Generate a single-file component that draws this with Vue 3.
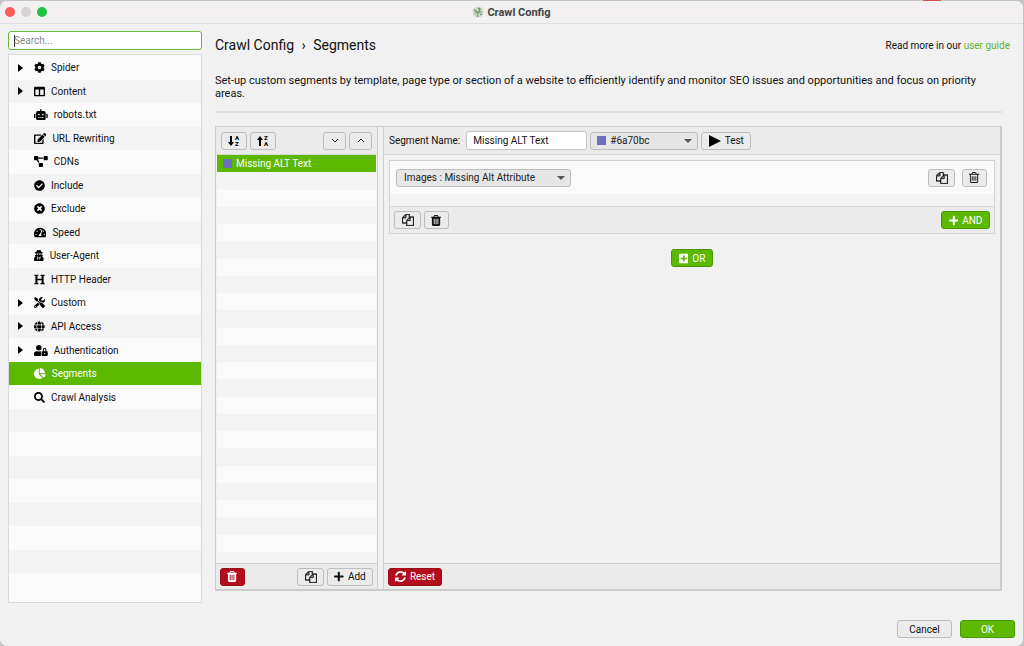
<script setup>
import { ref } from 'vue'

// icon name -> [viewBox, path]
const icons = {
  cog: ['0 0 512 512', 'M487.4 315.7l-42.6-24.6c4.3-23.2 4.3-47 0-70.2l42.6-24.6c4.9-2.8 7.1-8.6 5.5-14-11.1-35.6-30-67.8-54.7-94.6-3.8-4.1-10-5.1-14.8-2.3L380.8 110c-17.9-15.4-38.5-27.3-60.8-35.1V25.8c0-5.6-3.9-10.5-9.4-11.7-36.7-8.2-74.3-7.8-109.2 0-5.5 1.2-9.4 6.1-9.4 11.7V75c-22.2 7.9-42.8 19.8-60.8 35.1L88.7 85.5c-4.9-2.8-11-1.9-14.8 2.3-24.7 26.7-43.6 58.9-54.7 94.6-1.7 5.4.6 11.2 5.5 14L67.3 221c-4.3 23.2-4.3 47 0 70.2l-42.6 24.6c-4.9 2.8-7.1 8.6-5.5 14 11.1 35.6 30 67.8 54.7 94.6 3.8 4.1 10 5.1 14.8 2.3l42.6-24.6c17.9 15.4 38.5 27.3 60.8 35.1v49.2c0 5.6 3.9 10.5 9.4 11.7 36.7 8.2 74.3 7.8 109.2 0 5.5-1.2 9.4-6.1 9.4-11.7v-49.2c22.2-7.9 42.8-19.8 60.8-35.1l42.6 24.6c4.9 2.8 11 1.9 14.8-2.3 24.7-26.7 43.6-58.9 54.7-94.6 1.5-5.5-.7-11.3-5.6-14.1zM256 336c-44.1 0-80-35.9-80-80s35.9-80 80-80 80 35.9 80 80-35.9 80-80 80z'],
  columns: ['0 0 512 512', 'M464 32H48C21.49 32 0 53.49 0 80v352c0 26.51 21.49 48 48 48h416c26.51 0 48-21.49 48-48V80c0-26.51-21.49-48-48-48zM224 416H64V160h160v256zm224 0H288V160h160v256z'],
  robot: ['0 0 640 512', 'M32 224H64V416H32A32 32 0 0 1 0 384V256A32 32 0 0 1 32 224Zm512-48V448a64 64 0 0 1-64 64H160a64 64 0 0 1-64-64V176a80 80 0 0 1 80-80H288V32a32 32 0 0 1 64 0V96H464A80 80 0 0 1 544 176ZM264 256a40 40 0 1 0-40 40A40 40 0 0 0 264 256Zm-8 128H192v32h64Zm96 0H288v32h64ZM456 256a40 40 0 1 0-40 40A40 40 0 0 0 456 256Zm-8 128H384v32h64ZM640 256V384a32 32 0 0 1-32 32H576V224h32A32 32 0 0 1 640 256Z'],
  edit: ['0 0 576 512', 'M402.6 83.2l90.2 90.2c3.8 3.8 3.8 10 0 13.8L274.4 405.6l-92.8 10.3c-12.4 1.4-22.9-9.1-21.5-21.5l10.3-92.8L388.8 83.2c3.8-3.8 10-3.8 13.8 0zm162-22.9l-48.8-48.8c-15.2-15.2-39.9-15.2-55.2 0l-35.4 35.4c-3.8 3.8-3.8 10 0 13.8l90.2 90.2c3.8 3.8 10 3.8 13.8 0l35.4-35.4c15.2-15.3 15.2-40 0-55.2zM384 346.2V448H64V128h229.8c3.2 0 6.2-1.3 8.5-3.5l40-40c7.6-7.6 2.2-20.5-8.5-20.5H48C21.5 64 0 85.5 0 112v352c0 26.5 21.5 48 48 48h352c26.5 0 48-21.5 48-48V306.2c0-10.7-12.9-16-20.5-8.5l-40 40c-2.2 2.3-3.5 5.3-3.5 8.5z'],
  diagram: ['0 0 640 512', 'M384 320H256c-17.67 0-32 14.33-32 32v128c0 17.67 14.33 32 32 32h128c17.67 0 32-14.33 32-32V352c0-17.67-14.33-32-32-32zM192 32c0-17.67-14.33-32-32-32H32C14.33 0 0 14.33 0 32v128c0 17.67 14.33 32 32 32h95.72l73.16 128.04C211.98 300.98 232.4 288 256 288h.28L192 175.51V128h224V64H192V32zM608 0H480c-17.67 0-32 14.33-32 32v128c0 17.67 14.33 32 32 32h128c17.67 0 32-14.33 32-32V32c0-17.67-14.33-32-32-32z'],
  check: ['0 0 512 512', 'M504 256c0 136.967-111.033 248-248 248S8 392.967 8 256 119.033 8 256 8s248 111.033 248 248zM227.314 387.314l184-184c6.248-6.248 6.248-16.379 0-22.627l-22.627-22.627c-6.248-6.249-16.379-6.249-22.628 0L216 308.118l-70.059-70.059c-6.248-6.248-16.379-6.248-22.628 0l-22.627 22.627c-6.248 6.248-6.248 16.379 0 22.627l104 104c6.249 6.249 16.379 6.249 22.628.001z'],
  times: ['0 0 512 512', 'M256 8C119 8 8 119 8 256s111 248 248 248 248-111 248-248S393 8 256 8zm121.6 313.1c4.7 4.7 4.7 12.3 0 17L338 377.6c-4.7 4.7-12.3 4.7-17 0L256 312l-65.1 65.6c-4.7 4.7-12.3 4.7-17 0L134.4 338c-4.7-4.7-4.7-12.3 0-17l65.6-65-65.6-65.1c-4.7-4.7-4.7-12.3 0-17l39.6-39.6c4.7-4.7 12.3-4.7 17 0l65 65.7 65.1-65.6c4.7-4.7 12.3-4.7 17 0l39.6 39.6c4.7 4.7 4.7 12.3 0 17L312 256l65.6 65.1z'],
  gauge: ['0 0 576 512', 'M288 32C128.94 32 0 160.94 0 320c0 52.8 14.25 102.26 39.06 144.8 5.61 9.62 16.3 15.2 27.44 15.2h443c11.14 0 21.83-5.58 27.44-15.2C561.75 422.26 576 372.8 576 320c0-159.06-128.94-288-288-288zm0 64c14.71 0 26.58 10.13 30.32 23.65-1.11 2.26-2.64 4.23-3.45 6.67l-9.22 27.67c-5.13 3.49-10.97 6.01-17.64 6.01-17.67 0-32-14.33-32-32S270.33 96 288 96zM96 384c-17.67 0-32-14.33-32-32s14.33-32 32-32 32 14.33 32 32-14.33 32-32 32zm48-160c-17.67 0-32-14.33-32-32s14.33-32 32-32 32 14.33 32 32-14.33 32-32 32zm246.77-72.41l-61.33 184C343.13 347.33 352 364.54 352 384c0 11.72-3.38 22.55-8.88 32H232.88c-5.5-9.45-8.88-20.28-8.88-32 0-33.94 26.5-61.43 59.9-63.59l61.34-184.01c4.17-12.56 17.73-19.45 30.36-15.17 12.57 4.19 19.35 17.79 15.17 30.36zm14.66 57.2l15.52-46.55c3.47-1.29 7.13-2.23 11.05-2.23 17.67 0 32 14.33 32 32s-14.33 32-32 32c-11.38-.01-20.89-6.28-26.57-15.22zM480 384c-17.67 0-32-14.33-32-32s14.33-32 32-32 32 14.33 32 32-14.33 32-32 32z'],
  secret: ['0 0 448 512', 'M383.9 308.3l23.9-62.6c4-10.5-3.7-21.7-15-21.7h-58.5c11-18.9 17.8-40.6 17.8-64v-.3c39.2-7.8 64-19.1 64-31.7 0-13.3-27.3-25.1-70.1-33-9.2-32.8-27-65.8-40.6-82.8-9.5-11.9-25.9-15.6-39.5-8.8l-27.6 13.8c-9 4.5-19.6 4.5-28.6 0L182.1 3.4c-13.6-6.8-30-3.1-39.5 8.8-13.5 17-31.4 50-40.6 82.8-42.7 7.9-70 19.7-70 33 0 12.6 24.8 23.9 64 31.7v.3c0 23.4 6.8 45.1 17.8 64H56.3c-11.5 0-19.2 11.7-14.7 22.3l25.8 60.2C27.3 329.8 0 372.7 0 422.4v44.8C0 491.9 20.1 512 44.8 512h358.4c24.7 0 44.8-20.1 44.8-44.8v-44.8c0-48.4-25.8-90.4-64.1-114.1zM176 480l-41.6-192 49.6 32 24 40-32 120zm96 0l-32-120 24-40 49.6-32L272 480zm41.7-298.5c-3.9 11.9-7 24.6-16.5 33.4-10.1 9.3-48 22.4-64-25-2.8-8.4-15.4-8.4-18.3 0-17 50.2-56 32.4-64 25-9.5-8.8-12.7-21.5-16.5-33.4-.8-2.5-6.3-5.7-6.3-5.8v-10.8c28.3 3.6 61 5.8 96 5.8s67.7-2.1 96-5.8v10.8c-.1.1-5.6 3.2-6.4 5.8z'],
  heading: ['0 0 512 512', 'M448 96v320h32a16 16 0 0 1 16 16v32a16 16 0 0 1-16 16H320a16 16 0 0 1-16-16v-32a16 16 0 0 1 16-16h32V288H160v128h32a16 16 0 0 1 16 16v32a16 16 0 0 1-16 16H32a16 16 0 0 1-16-16v-32a16 16 0 0 1 16-16h32V96H32a16 16 0 0 1-16-16V48a16 16 0 0 1 16-16h160a16 16 0 0 1 16 16v32a16 16 0 0 1-16 16h-32v128h192V96h-32a16 16 0 0 1-16-16V48a16 16 0 0 1 16-16h160a16 16 0 0 1 16 16v32a16 16 0 0 1-16 16z'],
  tools: ['0 0 512 512', 'M501.1 395.7L384 278.6c-23.1-23.1-57.6-27.6-85.4-13.9L192 158.1V96L64 0 0 64l96 128h62.1l106.6 106.6c-13.6 27.8-9.2 62.3 13.9 85.4l117.1 117.1c14.6 14.6 38.2 14.6 52.7 0l52.7-52.7c14.5-14.6 14.5-38.2 0-52.7zM331.7 225c28.3 0 54.9 11 74.9 31l19.4 19.4c15.8-6.9 30.8-16.5 43.8-29.5 37.1-37.1 49.7-89.3 37.9-136.7-2.2-9-13.5-12.1-20.1-5.5l-74.4 74.4-67.9-11.3L334 98.9l74.4-74.4c6.6-6.6 3.4-17.9-5.7-20.2-47.4-11.7-99.6.9-136.6 37.9-28.5 28.5-41.9 66.1-41.2 103.6l82.1 82.1c8.1-1.9 16.5-2.9 24.7-2.9zm-103.9 82l-56.7-56.7L18.7 402.8c-25 25-25 65.5 0 90.5s65.5 25 90.5 0l123.6-123.6c-7.6-19.9-9.9-41.6-5-62.7zM64 472c-13.2 0-24-10.8-24-24 0-13.3 10.7-24 24-24s24 10.7 24 24c0 13.2-10.7 24-24 24z'],
  globe: ['0 0 496 512', 'M336.5 160C322 70.7 287.8 8 248 8s-74 62.7-88.5 152h177zM152 256c0 22.2 1.2 43.5 3.3 64h185.3c2.1-20.5 3.3-41.8 3.3-64s-1.2-43.5-3.3-64H155.3c-2.1 20.5-3.3 41.8-3.3 64zm324.7-96c-28.6-67.9-86.5-120.4-158-141.6 24.4 33.8 41.2 84.7 50 141.6h108zM177.2 18.4C105.8 39.6 47.8 92.1 19.3 160h108c8.7-56.9 25.5-107.8 49.9-141.6zM487.4 192H372.7c2.1 21 3.3 42.5 3.3 64s-1.2 43-3.3 64h114.6c5.5-20.5 8.6-41.8 8.6-64s-3.1-43.5-8.5-64zM120 256c0-21.5 1.2-43 3.3-64H8.6C3.2 212.5 0 233.8 0 256s3.2 43.5 8.6 64h114.6c-2-21-3.2-42.5-3.2-64zm39.5 96c14.5 89.3 48.7 152 88.5 152s74-62.7 88.5-152h-177zm159.3 141.6c71.4-21.2 129.4-73.7 158-141.6h-108c-8.8 56.9-25.6 107.8-50 141.6zM19.3 352c28.6 67.9 86.5 120.4 158 141.6-24.4-33.8-41.2-84.7-50-141.6h-108z'],
  lock: ['0 0 640 512', 'M224 256A128 128 0 1 0 96 128a128 128 0 0 0 128 128zm96 64a63.08 63.08 0 0 1 8.1-30.5c-4.8-.5-9.5-1.5-14.5-1.5h-16.7a174.08 174.08 0 0 1-145.8 0h-16.7A134.43 134.43 0 0 0 0 422.4V464a48 48 0 0 0 48 48h280.9a63.54 63.54 0 0 1-8.9-32zm288-32h-32v-80a80 80 0 0 0-160 0v80h-32a32 32 0 0 0-32 32v160a32 32 0 0 0 32 32h224a32 32 0 0 0 32-32V320a32 32 0 0 0-32-32zM496 432a32 32 0 1 1 32-32 32 32 0 0 1-32 32zm32-144h-64v-80a32 32 0 0 1 64 0z'],
  pie: ['0 0 544 512', 'M527.79 288H290.5l158.03 158.03c6.04 6.04 15.98 6.53 22.19.68 38.7-36.46 65.32-85.61 73.13-140.86 1.34-9.46-6.51-17.85-16.06-17.85zm-15.83-64.8C503.72 103.74 408.26 8.28 288.8.04 279.68-.59 272 7.1 272 16.24V240h223.77c9.14 0 16.82-7.68 16.19-16.8zM224 288V50.71c0-9.55-8.39-17.4-17.84-16.06C86.99 51.49-4.1 155.6.14 280.37 4.5 408.51 114.83 513.59 243.03 511.98c50.4-.63 96.97-16.87 135.26-44.03 7.9-5.6 8.42-17.23 1.57-24.08L224 288z'],
  search: ['0 0 512 512', 'M505 442.7L405.3 343c-4.5-4.5-10.6-7-17-7H372c27.6-35.3 44-79.7 44-128C416 93.1 322.9 0 208 0S0 93.1 0 208s93.1 208 208 208c48.3 0 92.7-16.4 128-44v16.3c0 6.4 2.5 12.5 7 17l99.7 99.7c9.4 9.4 24.6 9.4 33.9 0l28.3-28.3c9.4-9.4 9.4-24.6.1-34zM208 336c-70.7 0-128-57.2-128-128 0-70.7 57.2-128 128-128 70.7 0 128 57.2 128 128 0 70.7-57.2 128-128 128z'],
  plus: ['0 0 448 512', 'M416 208H272V64c0-17.67-14.33-32-32-32h-32c-17.67 0-32 14.33-32 32v144H32c-17.67 0-32 14.33-32 32v32c0 17.67 14.33 32 32 32h144v144c0 17.67 14.33 32 32 32h32c17.67 0 32-14.33 32-32V304h144c17.67 0 32-14.33 32-32v-32c0-17.67-14.33-32-32-32z'],
  plusSquare: ['0 0 448 512', 'M400 32H48C21.5 32 0 53.5 0 80v352c0 26.5 21.5 48 48 48h352c26.5 0 48-21.5 48-48V80c0-26.5-21.5-48-48-48zm-32 252c0 6.6-5.4 12-12 12h-92v92c0 6.6-5.4 12-12 12h-56c-6.6 0-12-5.4-12-12v-92H92c-6.6 0-12-5.4-12-12v-56c0-6.6 5.4-12 12-12h92v-92c0-6.6 5.4-12 12-12h56c6.6 0 12 5.4 12 12v92h92c6.6 0 12 5.4 12 12v56z'],
  copy: ['0 0 1792 1792', 'M1696 384q40 0 68 28t28 68v1216q0 40-28 68t-68 28h-960q-40 0-68-28t-28-68v-288h-544q-40 0-68-28t-28-68v-672q0-40 20-88t48-76l408-408q28-28 76-48t88-20h416q40 0 68 28t28 68v328q68-40 128-40h416zm-544 213l-299 299h299v-299zm-640-384l-299 299h299v-299zm196 647l316-316v-416h-384v416q0 40-28 68t-68 28h-416v640h512v-256q0-40 20-88t48-76zm956 804v-1152h-384v416q0 40-28 68t-68 28h-416v640h896z'],
  trash: ['192 128 1408 1536', 'M704 1376v-704q0-14-9-23t-23-9h-64q-14 0-23 9t-9 23v704q0 14 9 23t23 9h64q14 0 23-9t9-23zm256 0v-704q0-14-9-23t-23-9h-64q-14 0-23 9t-9 23v704q0 14 9 23t23 9h64q14 0 23-9t9-23zm256 0v-704q0-14-9-23t-23-9h-64q-14 0-23 9t-9 23v704q0 14 9 23t23 9h64q14 0 23-9t9-23zm-544-992h448l-48-117q-7-9-17-11h-317q-10 2-17 11zm928 32v64q0 14-9 23t-23 9h-96v948q0 83-47 143.500t-113 60.500h-832q-66 0-113-58.500t-47-141.500v-952h-96q-14 0-23-9t-9-23v-64q0-14 9-23t23-9h309l70-167q15-37 54-63t79-26h320q40 0 79 26t54 63l70 167h309q14 0 23 9t9 23z'],
  trashOutline: ['192 128 1408 1536', 'M704 736v576q0 14-9 23t-23 9h-64q-14 0-23-9t-9-23v-576q0-14 9-23t23-9h64q14 0 23 9t9 23zm256 0v576q0 14-9 23t-23 9h-64q-14 0-23-9t-9-23v-576q0-14 9-23t23-9h64q14 0 23 9t9 23zm256 0v576q0 14-9 23t-23 9h-64q-14 0-23-9t-9-23v-576q0-14 9-23t23-9h64q14 0 23 9t9 23zm128 724v-948h-896v948q0 22 7 40.500t14.500 27 10.500 8.500h832q3 0 10.500-8.500t14.500-27 7-40.500zm-672-1076h448l-48-117q-7-9-17-11h-317q-10 2-17 11zm928 32v64q0 14-9 23t-23 9h-96v948q0 83-47 143.500t-113 60.500h-832q-66 0-113-58.500t-47-141.500v-952h-96q-14 0-23-9t-9-23v-64q0-14 9-23t23-9h309l70-167q15-37 54-63t79-26h320q40 0 79 26t54 63l70 167h309q14 0 23 9t9 23z'],
  refresh: ['128 128 1536 1536', 'M1639 1056q0 5-1 7-64 268-268 434.500t-478 166.500q-146 0-282.500-55t-243.500-157l-129 129q-19 19-45 19t-45-19-19-45v-448q0-26 19-45t45-19h448q26 0 45 19t19 45-19 45l-137 137q71 66 161 102t187 36q134 0 250-65t186-179q11-17 53-117 8-23 30-23h192q13 0 22.500 9.500t9.500 22.500zm25-800v448q0 26-19 45t-45 19h-448q-26 0-45-19t-19-45 19-45l138-138q-148-137-349-137-134 0-250 65t-186 179q-11 17-53 117-8 23-30 23h-199q-13 0-22.500-9.500t-9.500-22.500v-7q65-268 270-434.500t480-166.500q146 0 284 55.500t245 156.500l130-129q19-19 45-19t45 19 19 45z']
}

// small helper component so we don't repeat the svg markup
const Icon = (props) => h('svg', { viewBox: icons[props.name][0], class: 'icon', 'aria-hidden': 'true' }, [
  h('path', { d: icons[props.name][1], 'fill-rule': 'evenodd' })
])
Icon.props = ['name']

const tree = [
  { label: 'Spider', icon: 'cog', open: true },
  { label: 'Content', icon: 'columns', open: true },
  { label: 'robots.txt', icon: 'robot' },
  { label: 'URL Rewriting', icon: 'edit' },
  { label: 'CDNs', icon: 'diagram' },
  { label: 'Include', icon: 'check' },
  { label: 'Exclude', icon: 'times' },
  { label: 'Speed', icon: 'gauge' },
  { label: 'User-Agent', icon: 'secret' },
  { label: 'HTTP Header', icon: 'heading' },
  { label: 'Custom', icon: 'tools', open: true },
  { label: 'API Access', icon: 'globe', open: true },
  { label: 'Authentication', icon: 'lock', open: true },
  { label: 'Segments', icon: 'pie' },
  { label: 'Crawl Analysis', icon: 'search' }
]

const selected = ref('Segments')
const search = ref('')
const segmentName = ref('Missing ALT Text')
const color = ref('#6a70bc')
const filter = ref('Images : Missing Alt Attribute')
</script>

<script>
import { h } from 'vue'
</script>

<template>
  <div class="desktop">
    <span class="behind"></span>
    <div class="window">
      <header class="titlebar">
        <div class="lights">
          <button class="light red" aria-label="Close"></button>
          <button class="light grey" aria-label="Minimise" disabled></button>
          <button class="light green" aria-label="Zoom"></button>
        </div>
        <h1>
          <svg class="logo" viewBox="0 0 12 12" aria-hidden="true">
            <circle cx="6" cy="6" r="5.500" fill="#cdd9c8" />
            <path d="M2 3l3 2 1 1 1-3 2-1-1 3 2 1-3 1-1 3-1-3-3 1 2-2z" fill="#7c9f72" />
            <path d="M2 4l3 2M8 8l2 1M5 9l1 2M6 2l2 1" stroke="#66835f" fill="none" />
          </svg>
          Crawl Config
        </h1>
      </header>

      <div class="content">
        <aside>
          <input class="search" type="text" v-model="search" placeholder="Search..." aria-label="Search">
          <ul class="tree">
            <li v-for="item in tree" :key="item.label" :class="{ selected: item.label === selected }"
              @click="selected = item.label">
              <svg class="arrow" viewBox="0 0 5 8" aria-hidden="true"><path v-if="item.open" d="M0 0l5 4-5 4z" /></svg>
              <Icon :name="item.icon" />
              <span>{{ item.label }}</span>
            </li>
            <li v-for="n in 8" :key="n"></li>
          </ul>
        </aside>

        <main>
          <div class="heading">
            <h2>Crawl Config <span class="sep">›</span> Segments</h2>
            <p>Read more in our <a href="#">user guide</a></p>
          </div>
          <p class="description">Set-up custom segments by template, page type or section of a website to efficiently
            identify and monitor SEO issues and opportunities and focus on priority areas.</p>
          <hr>

          <div class="panel">
            <section class="segments">
              <div class="bar">
                <button class="btn sort" aria-label="Sort ascending">
                  <svg class="sort-icon" viewBox="0 0 12 12" aria-hidden="true">
                    <path d="M2 1h2v6h2l-3 4-3-4h2z" />
                    <text x="7" y="5">A</text>
                    <text x="7" y="11">Z</text>
                  </svg>
                </button>
                <button class="btn sort" aria-label="Sort descending">
                  <svg class="sort-icon" viewBox="0 0 12 12" aria-hidden="true">
                    <path d="M2 11h2v-6h2l-3-4-3 4h2z" />
                    <text x="7" y="5">Z</text>
                    <text x="7" y="11">A</text>
                  </svg>
                </button>
                <button class="btn move first" aria-label="Move down">
                  <svg class="chevron" viewBox="0 0 8 5" aria-hidden="true"><path d="M1 1l3 3 3-3" /></svg>
                </button>
                <button class="btn move" aria-label="Move up">
                  <svg class="chevron" viewBox="0 0 8 5" aria-hidden="true"><path d="M1 4l3-3 3 3" /></svg>
                </button>
              </div>
              <ul class="list">
                <li class="selected"><span class="swatch"></span>{{ segmentName }}</li>
                <li v-for="n in 23" :key="n"></li>
              </ul>
              <div class="bar bottom">
                <button class="btn danger trash" aria-label="Delete segment"><Icon name="trash" /></button>
                <button class="btn copy push" aria-label="Copy segment"><Icon name="copy" /></button>
                <button class="btn add"><Icon name="plus" />Add</button>
              </div>
            </section>

            <section class="editor">
              <div class="bar">
                <label for="segment-name">Segment Name:</label>
                <input id="segment-name" class="name" type="text" v-model="segmentName">
                <div class="dropdown color">
                  <span class="swatch"></span>
                  <select v-model="color" aria-label="Segment colour">
                    <option>#6a70bc</option>
                  </select>
                  <svg class="caret" viewBox="0 0 8 4" aria-hidden="true"><path d="M0 0h8l-4 4z" /></svg>
                </div>
                <button class="btn test">
                  <svg class="play" viewBox="0 0 12 12" aria-hidden="true"><path d="M0 0l12 6-12 6z" /></svg>Test
                </button>
              </div>

              <div class="rules">
                <div class="group">
                  <div class="rule">
                    <div class="dropdown filter">
                      <select v-model="filter" aria-label="Filter">
                        <option>Images : Missing Alt Attribute</option>
                      </select>
                      <svg class="caret" viewBox="0 0 8 4" aria-hidden="true"><path d="M0 0h8l-4 4z" /></svg>
                    </div>
                    <button class="btn copy push" aria-label="Copy rule"><Icon name="copy" /></button>
                    <button class="btn trash" aria-label="Delete rule"><Icon name="trashOutline" /></button>
                  </div>
                  <div class="bar actions">
                    <button class="btn copy" aria-label="Copy group"><Icon name="copy" /></button>
                    <button class="btn trash" aria-label="Delete group"><Icon name="trash" /></button>
                    <button class="btn primary and push"><Icon name="plus" />AND</button>
                  </div>
                </div>
                <button class="btn primary or"><Icon name="plusSquare" />OR</button>
              </div>

              <div class="bar bottom">
                <button class="btn danger reset"><Icon name="refresh" />Reset</button>
              </div>
            </section>
          </div>
        </main>
      </div>

      <footer>
        <button class="btn wide">Cancel</button>
        <button class="btn primary wide">OK</button>
      </footer>
    </div>
  </div>
</template>

<style>
body {
  background: #c4c4c4;
}
</style>

<style scoped>
* {
  box-sizing: border-box;
}

.desktop {
  position: relative;
  min-height: 100vh;
  display: flex;
  padding: 1px 1px 0 0;
  font: 10px/13px Roboto, sans-serif;
  color: #111;
}

.behind {
  position: absolute;
  top: 0;
  right: 83px;
  width: 18px;
  height: 1px;
  background: #d2504f;
}

.window {
  flex: 1;
  min-width: 0;
  display: flex;
  flex-direction: column;
  background: #f1f1f1;
  border-radius: 7px;
}

button,
input,
select {
  font: inherit;
  color: inherit;
  margin: 0;
}

ul,
p,
h1,
h2 {
  margin: 0;
  padding: 0;
  list-style: none;
}

.titlebar {
  display: grid;
  grid-template-columns: 1fr auto 1fr;
  align-items: center;
  height: 23px;
  padding: 0 5px;
  background: #f2f0f1;
  border-bottom: 1px solid #dedede;
  border-radius: 7px 7px 0 0;
}

.titlebar h1 {
  display: flex;
  align-items: center;
  gap: 3px;
  font-size: 11px;
  font-weight: 700;
  color: #444;
}

.logo {
  width: 12px;
  height: 12px;
}

.lights {
  display: flex;
  gap: 6px;
}

.light {
  width: 10px;
  height: 10px;
  padding: 0;
  border: 0;
  border-radius: 50%;
}

.light.red {
  background: #fc5b57;
}

.light.grey {
  background: #d4d2d3;
}

.light.green {
  background: #1fc33d;
}

.content {
  flex: 1;
  display: flex;
  gap: 13px;
  padding: 7px 0 0 8px;
}

aside {
  width: 194px;
  display: flex;
  flex-direction: column;
  gap: 4px;
}

.search {
  height: 19px;
  padding: 0 5px;
  border: 1px solid #6cb93a;
  border-radius: 3px;
  outline: 0;
  /* text caret */
  background: linear-gradient(#333, #333) 5px 3px / 1px 12px no-repeat #fff;
}

.search::placeholder {
  color: #8a8a8a;
}

.tree {
  flex: 1;
  display: grid;
  grid-template-rows: repeat(23, 1fr);
  padding: 1px 0 5px;
  background: #fafafa;
  border: 1px solid #d9d9d9;
}

.tree li {
  display: flex;
  align-items: center;
  padding-left: 9px;
}

.tree li:nth-child(even),
.list li:nth-child(even) {
  background: #f3f3f3;
}

.tree li.selected,
.list li.selected {
  background: #5cb800;
  color: #fff;
}

.arrow {
  width: 5px;
  height: 8px;
  margin-right: 11px;
}

.icon {
  height: 11px;
  fill: currentColor;
}

.tree .icon {
  color: #000;
  margin-right: 6px;
}

.tree .selected .icon {
  color: #fff;
}

main {
  flex: 1;
  min-width: 0;
  display: flex;
  flex-direction: column;
  padding: 0 21px 12px 0;
}

.heading {
  display: flex;
  align-items: center;
  justify-content: space-between;
  height: 28px;
  margin-right: -8px;
}

.heading h2 {
  font-size: 14px;
  font-weight: 400;
  line-height: 18px;
}

.sep {
  margin: 0 4px;
}

.heading a {
  color: #5cb531;
  text-decoration: none;
}

.description {
  margin-top: 15px;
  font-size: 11px;
}

hr {
  width: 100%;
  height: 2px;
  margin: 11px 0 13px;
  border: 0;
  background: #e0e0e0;
}

.panel {
  flex: 1;
  display: flex;
  gap: 5px;
  border: 2px solid #cbcbcb;
  border-width: 1px 2px 2px 1px;
}

.segments {
  width: 162px;
  display: flex;
  flex-direction: column;
  border-right: 1px solid #cfcfcf;
}

.editor {
  flex: 1;
  min-width: 0;
  display: flex;
  flex-direction: column;
  border-left: 1px solid #cfcfcf;
}

.bar {
  display: flex;
  align-items: center;
  gap: 3px;
  height: 28px;
  padding: 0 5px;
  background: #ebebeb;
  border-bottom: 1px solid #d6d6d6;
}

.bar.bottom {
  height: 26px;
  padding: 0 4px;
  border-top: 1px solid #d0d0d0;
  border-bottom: 0;
}

.push,
.first {
  margin-left: auto;
}

.list {
  flex: 1;
  display: grid;
  grid-template-rows: repeat(23, 1fr) 11px;
  margin: 0 1px;
  background: #fafafa;
}

.list li {
  display: flex;
  align-items: center;
  gap: 4px;
  padding-left: 6px;
}

.swatch {
  width: 9px;
  height: 9px;
  background: #6a70bc;
}

.btn {
  display: inline-flex;
  align-items: center;
  justify-content: center;
  gap: 4px;
  height: 18px;
  padding: 0;
  background: #ebebeb;
  border: 1px solid #bdbdbd;
  border-radius: 3px;
}

.btn .icon {
  height: 11px;
}

.btn .icon,
.btn svg {
  flex: none;
}

.primary {
  background: #5cb800;
  border-color: #4a9800;
  color: #fff;
}

.danger {
  background: #b30d1b;
  border-color: #9c0b18;
  color: #fff;
}

.sort {
  width: 26px;
}

.sort-icon {
  width: 12px;
  height: 12px;
}

.sort-icon text {
  font: 900 6px Roboto, sans-serif;
}

.move {
  width: 23px;
}

.chevron {
  width: 8px;
  height: 5px;
  fill: none;
  stroke: #222;
}

.copy {
  width: 27px;
}

.copy .icon {
  height: 12px;
  stroke: currentColor;
  stroke-width: 40;
}

.trash {
  width: 25px;
}

.add {
  width: 46px;
}

.test {
  width: 50px;
}

.play {
  width: 12px;
  height: 12px;
}

.and {
  width: 49px;
}

.or {
  width: 42px;
}

.reset {
  width: 54px;
}

.wide {
  width: 55px;
}

.name {
  width: 121px;
  height: 19px;
  padding: 0 6px;
  background: #fff;
  border: 1px solid #c6c6c6;
  border-radius: 3px;
}

.editor label {
  margin-right: 3px;
}

/* swatch, select and caret share one grid cell */
.dropdown {
  display: grid;
  align-items: center;
}

.dropdown > * {
  grid-area: 1 / 1;
}

.dropdown select {
  width: 100%;
  height: 18px;
  padding: 0 7px;
  appearance: none;
  background: #e6e6e6;
  border: 1px solid #bdbdbd;
  border-radius: 3px;
  color: #222;
}

.caret {
  justify-self: end;
  width: 8px;
  height: 4px;
  margin-right: 6px;
  z-index: 1;
  fill: #555;
  pointer-events: none;
}

.color {
  width: 108px;
}

.color select {
  padding-left: 19px;
}

.color .swatch {
  margin-left: 7px;
  z-index: 1;
}

.filter {
  width: 175px;
}

.rules {
  flex: 1;
  display: flex;
  flex-direction: column;
  align-items: center;
  gap: 15px;
  padding: 5px;
}

.group {
  align-self: stretch;
  background: #f3f3f3;
  border: 1px solid #d2d2d2;
}

.rule {
  display: flex;
  align-items: center;
  gap: 7px;
  height: 33px;
  margin-bottom: 12px;
  padding: 0 7px 0 6px;
  background: #fafafa;
}

.actions {
  height: 27px;
  padding: 0 4px;
  border-top: 1px solid #d6d6d6;
  border-bottom: 0;
}

footer {
  display: flex;
  justify-content: flex-end;
  gap: 8px;
  padding: 17px 8px 8px;
}
</style>
